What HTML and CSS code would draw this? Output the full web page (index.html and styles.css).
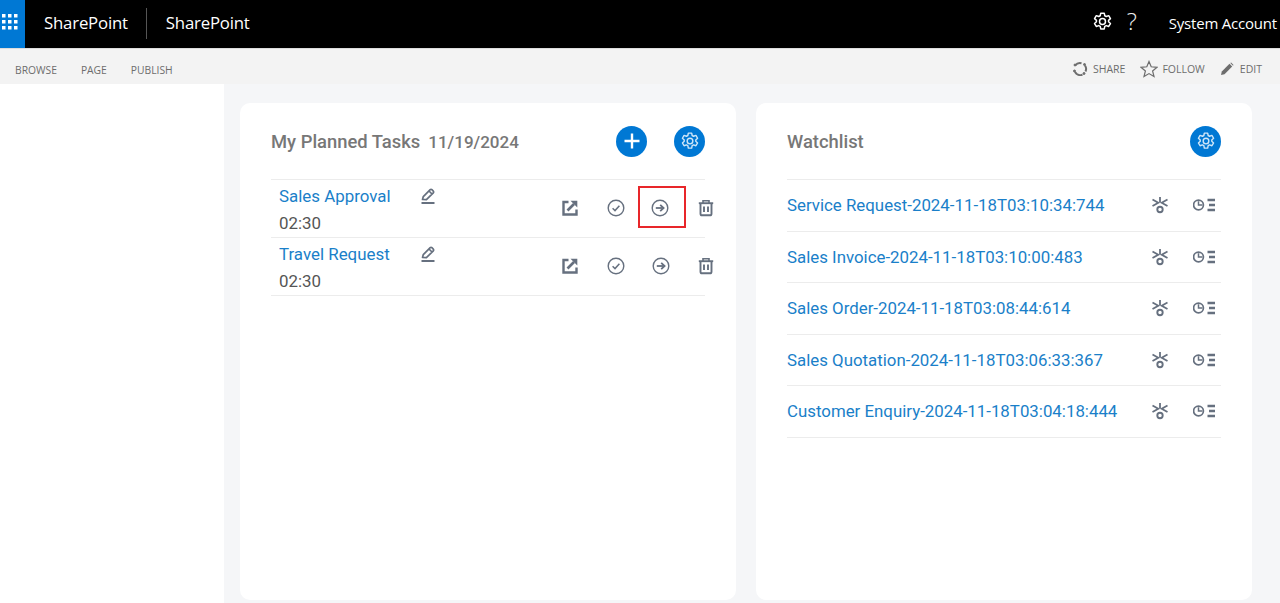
FILE: index.html
```html
<!DOCTYPE html>
<html lang="en">
<head>
    <meta charset="UTF-8">
    <title>SharePoint</title>
    <link rel="stylesheet" href="styles.css">
</head>
<body>
    <svg class="icon-defs" width="0" height="0">
        <defs>
            <symbol id="i-gear" viewBox="0 0 24 24">
                <path d="M10 2.500h4l.6 2.900 1.700.9 2.800-1 2 3.400-2.200 2c.1.5.1 1.100 0 1.600l2.200 2-2 3.400-2.800-1-1.700.9-.6 2.900h-4l-.6-2.900-1.700-.9-2.800 1-2-3.400 2.200-2a5 5 0 0 1 0-1.600l-2.200-2 2-3.400 2.800 1 1.700-.9z" fill="none" stroke="currentColor" stroke-width="1.700" stroke-linejoin="round"/>
                <circle cx="12" cy="12" r="3.400" fill="none" stroke="currentColor" stroke-width="1.700"/>
            </symbol>
            <symbol id="i-pencil" viewBox="0 0 18 18">
                <path d="M3.500 12.500 4.300 9.600 11.200 2.700a1.200 1.200 0 0 1 1.700 0l1.400 1.400a1.200 1.200 0 0 1 0 1.700L7.400 12.700z M10 4l3 3" fill="none" stroke="currentColor" stroke-width="1.700" stroke-linejoin="round"/>
                <path d="M2.500 16h13" stroke="currentColor" stroke-width="2"/>
            </symbol>
            <symbol id="i-open" viewBox="0 0 18 18">
                <path d="M7.500 3H2.500v12.500H15.500V10.500" fill="none" stroke="currentColor" stroke-width="2.400"/>
                <path d="M6.500 11.500 13 5" stroke="currentColor" stroke-width="2.600"/>
                <path d="M9.500 1.800h6.800v6.800z" fill="currentColor"/>
            </symbol>
            <symbol id="i-check" viewBox="0 0 18 18">
                <circle cx="9" cy="9" r="7.800" fill="none" stroke="currentColor" stroke-width="1.400"/>
                <path d="M5.600 9.300 8 11.600l4.400-4.800" fill="none" stroke="currentColor" stroke-width="1.500"/>
            </symbol>
            <symbol id="i-forward" viewBox="0 0 18 18">
                <circle cx="9" cy="9" r="7.800" fill="none" stroke="currentColor" stroke-width="1.400"/>
                <path d="M4.800 9h7" stroke="currentColor" stroke-width="1.800"/>
                <path d="M9.200 5.800 12.600 9l-3.400 3.200" fill="none" stroke="currentColor" stroke-width="1.800"/>
            </symbol>
            <symbol id="i-trash" viewBox="0 0 18 18">
                <path d="M1.800 4.200h14.400" stroke="currentColor" stroke-width="1.900"/>
                <path d="M6 4V1.800h6V4" fill="none" stroke="currentColor" stroke-width="1.600"/>
                <path d="M3.500 4.500v10.200c0 1 .7 1.600 1.600 1.600h7.800c.9 0 1.600-.6 1.600-1.600V4.500" fill="none" stroke="currentColor" stroke-width="1.900"/>
                <path d="M7 7.500v5.500M11 7.500v5.500" stroke="currentColor" stroke-width="1.900"/>
            </symbol>
            <symbol id="i-eye" viewBox="0 0 18 18">
                <path d="M9 1v5.500" stroke="currentColor" stroke-width="1.800"/>
                <path d="M1.500 3.500 7.300 6.700 1.500 10M16.500 3.500 10.700 6.700 16.500 10" fill="none" stroke="currentColor" stroke-width="1.800"/>
                <circle cx="9" cy="13.500" r="2.700" fill="none" stroke="currentColor" stroke-width="1.900"/>
            </symbol>
            <symbol id="i-history" viewBox="0 0 22 16">
                <circle cx="5.500" cy="8" r="4.900" fill="none" stroke="currentColor" stroke-width="1.700"/>
                <path d="M5.500 4.200V8h3.800" fill="none" stroke="currentColor" stroke-width="1.500"/>
                <path d="M14.500 3H22M16 8h6M14.500 13H22" stroke="currentColor" stroke-width="2.600"/>
            </symbol>
        </defs>
    </svg>

    <header class="suite-bar">
        <div class="waffle">
            <svg width="18" height="18" viewBox="0 0 18 18" fill="#fff">
                <rect x="1" y="2" width="3.500" height="3.500"/><rect x="7" y="2" width="3.500" height="3.500"/><rect x="13" y="2" width="3.500" height="3.500"/>
                <rect x="1" y="8" width="3.500" height="3.500"/><rect x="7" y="8" width="3.500" height="3.500"/><rect x="13" y="8" width="3.500" height="3.500"/>
                <rect x="1" y="14" width="3.500" height="3.500"/><rect x="7" y="14" width="3.500" height="3.500"/><rect x="13" y="14" width="3.500" height="3.500"/>
            </svg>
        </div>
        <span class="brand">SharePoint</span>
        <span class="brand-divider"></span>
        <span class="brand">SharePoint</span>
        <div class="suite-right">
            <svg class="suite-gear"><use href="#i-gear"/></svg>
            <span class="help">?</span>
            <span class="account">System Account</span>
        </div>
    </header>

    <nav class="ribbon">
        <a class="ribbon-tab">BROWSE</a>
        <a class="ribbon-tab">PAGE</a>
        <a class="ribbon-tab">PUBLISH</a>
        <div class="ribbon-right">
            <span class="ribbon-action share">
                <svg width="16" height="16" viewBox="0 0 16 16" fill="none" stroke="#6d6d6d" stroke-width="2"><path d="M3.200 4.500A6 6 0 0 1 9.500 2.200"/><path d="M13 4.500a6 6 0 0 1 .5 6"/><path d="M10.500 13.600a6 6 0 0 1-7.500-2.500"/><circle cx="3" cy="4" r="1" fill="#6d6d6d" stroke-width="1"/><circle cx="12.500" cy="3.500" r="1" fill="#6d6d6d" stroke-width="1"/><circle cx="12" cy="12.500" r="1" fill="#6d6d6d" stroke-width="1"/><circle cx="2.500" cy="10" r="1" fill="#6d6d6d" stroke-width="1"/></svg>
                SHARE
            </span>
            <span class="ribbon-action">
                <svg width="18" height="18" viewBox="0 0 18 18" fill="none" stroke="#6d6d6d" stroke-width="1.200"><path d="M9 1.500 11.200 6.800l5.800.5-4.400 3.700 1.400 5.600L9 13.600l-5 3 1.400-5.600L1 7.300l5.800-.5z"/></svg>
                FOLLOW
            </span>
            <span class="ribbon-action edit">
                <svg width="14" height="14" viewBox="0 0 14 14" fill="#6d6d6d"><path d="M1 13l.8-3.500L9.500 1.800l2.700 2.700-7.700 7.700z"/><path d="M10.300 1l.8-.5 2.400 2.400-.5.800z"/></svg>
                EDIT
            </span>
        </div>
    </nav>

    <div class="page">
        <aside class="side"></aside>
        <main class="content">
            <section class="card">
                <div class="card-head">
                    <h2 class="card-title">My Planned Tasks<span class="card-date">11/19/2024</span></h2>
                    <button class="round-btn round-add">
                        <svg width="20" height="20" viewBox="0 0 20 20"><path d="M10 2.500v15M2.500 10h15" stroke="#fff" stroke-width="2.400"/></svg>
                    </button>
                    <button class="round-btn"><svg class="round-gear"><use href="#i-gear"/></svg></button>
                </div>
                <ul class="task-list">
                    <li class="task">
                        <div class="task-text">
                            <div class="task-name"><a class="link">Sales Approval</a><svg class="ico pencil"><use href="#i-pencil"/></svg></div>
                            <div class="task-time">02:30</div>
                        </div>
                        <div class="task-actions">
                            <span class="act"><svg class="ico"><use href="#i-open"/></svg></span>
                            <span class="act"><svg class="ico"><use href="#i-check"/></svg></span>
                            <span class="act act-marked"><svg class="ico"><use href="#i-forward"/></svg></span>
                            <span class="act"><svg class="ico"><use href="#i-trash"/></svg></span>
                        </div>
                    </li>
                    <li class="task">
                        <div class="task-text">
                            <div class="task-name"><a class="link">Travel Request</a><svg class="ico pencil"><use href="#i-pencil"/></svg></div>
                            <div class="task-time">02:30</div>
                        </div>
                        <div class="task-actions">
                            <span class="act"><svg class="ico"><use href="#i-open"/></svg></span>
                            <span class="act"><svg class="ico"><use href="#i-check"/></svg></span>
                            <span class="act"><svg class="ico"><use href="#i-forward"/></svg></span>
                            <span class="act"><svg class="ico"><use href="#i-trash"/></svg></span>
                        </div>
                    </li>
                </ul>
            </section>

            <section class="card">
                <div class="card-head">
                    <h2 class="card-title">Watchlist</h2>
                    <button class="round-btn"><svg class="round-gear"><use href="#i-gear"/></svg></button>
                </div>
                <ul class="watch-list">
                    <li class="watch"><a class="link">Service Request-2024-11-18T03:10:34:744</a><svg class="ico eye"><use href="#i-eye"/></svg><svg class="ico hist"><use href="#i-history"/></svg></li>
                    <li class="watch"><a class="link">Sales Invoice-2024-11-18T03:10:00:483</a><svg class="ico eye"><use href="#i-eye"/></svg><svg class="ico hist"><use href="#i-history"/></svg></li>
                    <li class="watch"><a class="link">Sales Order-2024-11-18T03:08:44:614</a><svg class="ico eye"><use href="#i-eye"/></svg><svg class="ico hist"><use href="#i-history"/></svg></li>
                    <li class="watch"><a class="link">Sales Quotation-2024-11-18T03:06:33:367</a><svg class="ico eye"><use href="#i-eye"/></svg><svg class="ico hist"><use href="#i-history"/></svg></li>
                    <li class="watch"><a class="link">Customer Enquiry-2024-11-18T03:04:18:444</a><svg class="ico eye"><use href="#i-eye"/></svg><svg class="ico hist"><use href="#i-history"/></svg></li>
                </ul>
            </section>
        </main>
    </div>
</body>
</html>
```

FILE: styles.css
```css
/* General */
html, body {
    height: 100%;
}

body {
    margin: 0;
    display: flex;
    flex-direction: column;
    overflow: hidden;
    font-family: Roboto, sans-serif;
    background: #fff;
}

.icon-defs {
    position: absolute;
}

/* Suite bar */
.suite-bar {
    height: 48px;
    flex: none;
    display: flex;
    align-items: center;
    padding-bottom: 2px;
    box-sizing: border-box;
    background: #000;
    color: #fff;
    font-family: "Open Sans", sans-serif;
}

.waffle {
    width: 25px;
    height: 48px;
    box-sizing: border-box;
    padding: 0 5px 7px 0;
    margin-bottom: -2px;
    display: flex;
    align-items: center;
    justify-content: center;
    background: #0078d4;
    margin-right: 19px;
}

.brand {
    margin-top: -2px;
    font-size: 16.800px;
    letter-spacing: -0.200px;
}

.brand-divider {
    width: 1px;
    height: 31px;
    margin: 0 19px 0 18px;
    background: #555;
}

.suite-right {
    margin-left: auto;
    display: flex;
    align-items: center;
    padding-right: 3px;
}

.suite-gear {
    width: 21px;
    height: 21px;
    margin-top: -3px;
}

.help {
    width: 14px;
    margin-left: 14px;
    margin-top: -5px;
    font-size: 24px;
    font-weight: 300;
    line-height: 30px;
    color: #eee;
}

.account {
    margin-left: 28px;
    font-size: 15px;
    letter-spacing: -0.200px;
    white-space: nowrap;
}

/* Ribbon */
.ribbon {
    height: 36px;
    flex: none;
    display: flex;
    align-items: center;
    padding: 6px 15px 0;
    background: #f3f3f3;
    border-top: 1px solid #ddd;
    box-sizing: border-box;
    font-family: "Open Sans", sans-serif;
    color: #6d6d6d;
    font-size: 10.300px;
}

.ribbon-tab {
    margin-right: 24px;
}

.ribbon-right {
    margin-left: auto;
    display: flex;
    align-items: center;
    gap: 15px;
    margin-right: 3px;
    margin-top: -1px;
    font-size: 10.500px;
}

.ribbon-action {
    display: flex;
    align-items: center;
    gap: 4px;
}

.share {
    gap: 5px;
}

.edit {
    gap: 6px;
}

/* Main area */
.page {
    flex: 1;
    min-height: 0;
    display: flex;
}

.side {
    width: 224px;
    flex: none;
    background: #fff;
}

.content {
    flex: 1;
    min-width: 0;
    display: flex;
    gap: 20px;
    padding: 19px 28px 3px 16px;
    background: #f5f6f8;
}

.card {
    flex: 1;
    min-width: 0;
    padding: 0 31px;
    background: #fff;
    border-radius: 10px;
}

.card-head {
    height: 76px;
    display: flex;
    align-items: center;
    gap: 27px;
}

.card-title {
    margin: 0 auto 0 0;
    font-size: 18.400px;
    font-weight: 500;
    color: #777;
}

.card-date {
    margin-left: 8px;
    font-size: 17px;
    font-weight: 500;
}

.round-btn {
    width: 31px;
    height: 31px;
    padding: 0;
    border: none;
    border-radius: 50%;
    display: flex;
    align-items: center;
    justify-content: center;
    background: #0078d4;
    color: #cfe6f8;
}

.round-gear {
    width: 20px;
    height: 20px;
}

.link {
    color: #1a7fc9;
}

ul {
    margin: 0;
    padding: 0;
    list-style: none;
    border-top: 1px solid #ececec;
}

.ico {
    color: #66707f;
    width: 18px;
    height: 18px;
}

/* Planned tasks */
.task {
    height: 58px;
    box-sizing: border-box;
    display: flex;
    padding-left: 8px;
    border-bottom: 1px solid #ececec;
    font-size: 16.900px;
}

.task-text {
    flex: 1;
    min-width: 0;
    padding-top: 5px;
}

.task-name {
    display: flex;
    align-items: center;
    height: 22px;
}

.task-name .link {
    width: 140px;
}

.task-time {
    margin-top: 6px;
    color: #555;
}

.task-actions {
    display: flex;
    align-items: center;
    padding-bottom: 3px;
    margin-right: -24px;
}

.act {
    width: 45.300px;
    height: 42px;
    box-sizing: border-box;
    display: flex;
    align-items: center;
    justify-content: center;
}

.act .ico {
    margin-top: 2px;
}

.act-marked {
    width: 48px;
    margin: 0 -2.100px 0 -0.600px;
    padding-right: 4px;
    border: 2px solid #e8262a;
}

/* Watchlist */
.watch {
    height: 51.500px;
    box-sizing: border-box;
    display: flex;
    align-items: center;
    border-bottom: 1px solid #ececec;
    font-size: 16.850px;
}

.watch .link {
    flex: 1;
}

.eye {
    margin-right: 24px;
}

.hist {
    width: 22px;
    height: 16px;
    margin-right: 6px;
}
```
